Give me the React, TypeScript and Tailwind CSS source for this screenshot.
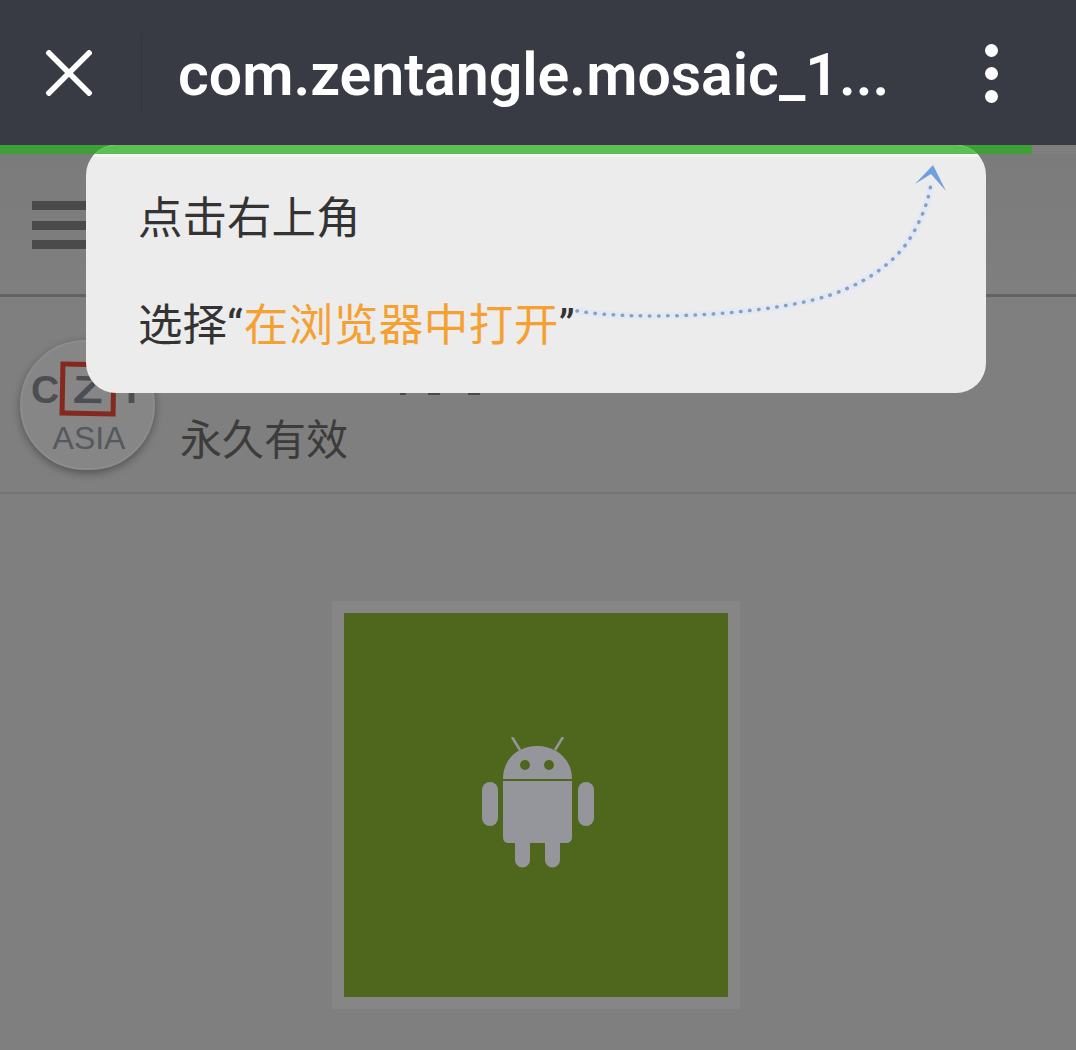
function AndroidIcon() {
  return (
    <svg width="112" height="132" viewBox="0 0 112 132" fill="#95969c">
      <path d="M30 0 L38 13 M81 0 L73 13" stroke="#95969c" strokeWidth="2.5" fill="none" />
      <path d="M21 42 C21 22 36 9 55 9 C74 9 90 22 90 42 Z" />
      <circle cx="43" cy="28" r="5" fill="#4f661d" />
      <circle cx="67" cy="28" r="5" fill="#4f661d" />
      <path d="M21 44 H90 V100 Q90 106 84 106 H78 V123 A7.5 7.5 0 0 1 63 123 V106 H48 V123 A7.5 7.5 0 0 1 33 123 V106 H27 Q21 106 21 100 Z" />
      <rect x="0" y="45" width="16" height="44" rx="8" />
      <rect x="96" y="45" width="16" height="44" rx="8" />
    </svg>
  );
}

function Arrow() {
  const d = "M6 151 C 60 160, 170 157, 242 140 C 290 128, 320 105, 336 83 C 350 62, 358 40, 360 23";
  return (
    <svg className="absolute left-[485px] top-[15px]" width="380" height="170" viewBox="0 0 380 170" fill="none">
      <path d={d} stroke="#e2e9f2" strokeWidth="7" />
      <path d={d} stroke="#8a9fc8" strokeWidth="3.5" strokeLinecap="round" strokeDasharray="0.5 8.6" />
      <path d="M344 24 L362 5 L375 31 L360 14 Z" fill="#6f9fe0" />
    </svg>
  );
}

export default function App() {
  return (
    <div className="relative w-[1076px] h-[1050px] overflow-hidden bg-[#7f7f7f] font-['Roboto','Noto_Sans_CJK_SC',sans-serif]">
      <div className="flex items-center h-[145px] bg-[#393b44]">
        <svg className="ml-[46px] mt-[1px] shrink-0" width="46" height="46" viewBox="0 0 46 46" stroke="#fff" strokeWidth="5.5" strokeLinecap="square">
          <path d="M3 3 L43 43 M43 3 L3 43" />
        </svg>
        <div className="ml-[49px] w-px h-[78px] bg-[#33353d]" />
        <div className="ml-[36px] mt-[4px] w-[720px] text-white text-[59px] font-semibold leading-none whitespace-nowrap">com.zentangle.mosaic_1...</div>
        <div className="flex flex-col gap-[10px] ml-[87px] mt-[2px]">
          <div className="w-[13px] h-[13px] rounded-full bg-white" />
          <div className="w-[13px] h-[13px] rounded-full bg-white" />
          <div className="w-[13px] h-[13px] rounded-full bg-white" />
        </div>
      </div>

      <div className="h-[9px]">
        <div className="w-[1032px] h-full bg-[#3f9f39]" />
      </div>

      <div className="h-[143px] flex items-center pl-[32px] pt-[2px] border-b-[3px] border-[#636363] bg-gradient-to-b from-[#7b7b7b] to-[#7f7f7f]">
        <div className="flex flex-col gap-[10.5px]">
          <div className="w-[60px] h-[9px] bg-[#4a4a4a]" />
          <div className="w-[60px] h-[9px] bg-[#4a4a4a]" />
          <div className="w-[60px] h-[9px] bg-[#4a4a4a]" />
        </div>
      </div>

      <div className="h-[197px] flex items-start pl-[20px] border-b-2 border-[#737373]">
        <div className="mt-[43px] w-[135px] h-[130px] rounded-full bg-[#868686] border-2 border-[#8c8c8c] shadow-[0_3px_8px_rgba(0,0,0,0.35)] pt-[20px] pl-[9px] shrink-0">
          <div className="flex items-center text-[#4b4e52] font-['Liberation_Sans',sans-serif] font-bold text-[39px] leading-none">
            <span className="w-[29px]">C</span>
            <span className="flex items-center justify-center w-[56px] h-[54px] border-[5px] border-[#85291f] rotate-[1deg]">
              <span className="scale-x-125">Z</span>
            </span>
            <span className="ml-[10px]">I</span>
          </div>
          <div className="text-[#55585c] font-['Liberation_Sans',sans-serif] text-[32px] leading-none text-center mt-[6px] pr-[6px]">ASIA</div>
        </div>
        <div className="ml-[25px] mt-[123px] text-[#3c3c3c] text-[42px] leading-none whitespace-nowrap">永久有效</div>
      </div>

      <div className="flex justify-center pt-[107px] pr-[4px]">
        <div className="p-[12px] bg-[#868686]">
          <div className="w-[384px] h-[384px] bg-[#4f661d] flex items-center justify-center pl-[3px] pb-[4px]">
            <AndroidIcon />
          </div>
        </div>
      </div>

      {/* bits of the title that stick out below the popup */}
      <svg className="absolute left-[398px] top-[393px]" width="90" height="4" viewBox="0 0 90 4" stroke="#4a4a4a" strokeWidth="2">
        <path d="M2 1 H8 M30 1 H42 M70 1 H82" />
      </svg>

      <div className="absolute left-[86px] top-[145px] w-[900px] h-[248px] rounded-[30px] overflow-hidden bg-[#ececec] text-[#333] text-[44.5px] leading-none">
        <div className="h-[9px] bg-[#5cbf54]" />
        <div className="h-[3px] bg-[#f3f6f1]" />
        <div className="pl-[52px] pt-[40px]">点击右上角</div>
        <div className="pl-[52px] pt-[62px] whitespace-nowrap">
          选择“<span className="text-[#f5a030] ml-[1px] tracking-[0.5px]">在浏览器中打开</span>”
        </div>
        <Arrow />
      </div>
    </div>
  );
}
